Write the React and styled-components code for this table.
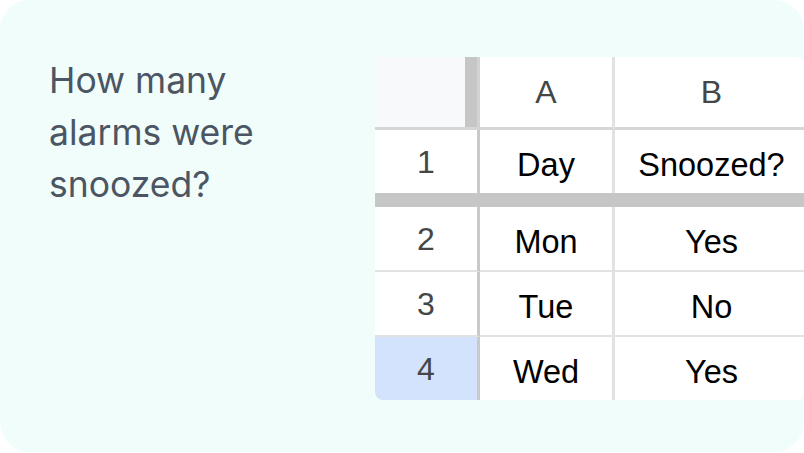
import React from "react";
import styled, { createGlobalStyle, css } from "styled-components";

const Global = createGlobalStyle`
  html, body { margin: 0; padding: 0; background: #ffffff; }
  #root { width: 804px; height: 453px; }
`;

const Card = styled.div`
  box-sizing: border-box;
  width: 804px;
  height: 452px;
  background: #f0fdfa;
  border-radius: 30px;
  overflow: hidden;
  display: grid;
  grid-template-columns: 326px 429px;
  padding: 57px 0 0 49px;
`;

const Question = styled.p`
  margin: -2px 0 0 0;
  font-family: Inter, "Liberation Sans", sans-serif;
  font-size: 35.5px;
  line-height: 52px;
  font-weight: 400;
  color: #4b5563;
  width: 260px;
`;

const Sheet = styled.div`
  display: grid;
  grid-template-columns: 105px 135px 1fr;
  grid-template-rows: 73px 63px 14px 65px 65px 63px;
  width: 429px;
  height: 343px;
  background: #ffffff;
  border-radius: 0 8px 8px 8px;
  overflow: hidden;
  font-family: "Liberation Sans", Arial, sans-serif;
`;

const Cell = styled.div`
  box-sizing: border-box;
  display: flex;
  align-items: center;
  justify-content: center;
  padding-top: 7px;
  padding-left: ${(p) => (p.$lastCol ? "4px" : "0")};
  font-size: 32.5px;
  color: #000000;
  background: #ffffff;
  border-right: ${(p) => (p.$lastCol ? "none" : "3px solid #e2e2e2")};
  border-bottom: ${(p) => (p.$lastRow || p.$beforeFreeze ? "none" : "2px solid #e2e2e2")};

  ${(p) =>
    p.$head &&
    css`
      padding-top: 0;
      color: #444746;
      font-size: 32px;
      border-bottom: 3px solid #d6d6d6;
    `}

  ${(p) =>
    p.$rowHead &&
    css`
      padding-top: 2px;
      color: #444746;
      font-size: 32px;
      border-right: 3px solid #c9c9c9;
    `}

  ${(p) =>
    p.$selected &&
    css`
      background: #d3e3fd;
    `}
`;

const Corner = styled.div`
  box-sizing: border-box;
  background: linear-gradient(to right, #f8f9fa 90px, #c6c6c6 90px);
  border-right: 3px solid #d2d2d2;
  border-bottom: 3px solid #d6d6d6;
`;

const FreezeBar = styled.div`
  grid-column: 1 / -1;
  background: #c6c6c6;
`;

const rows = [
  { n: "1", a: "Day", b: "Snoozed?" },
  { n: "2", a: "Mon", b: "Yes" },
  { n: "3", a: "Tue", b: "No" },
  { n: "4", a: "Wed", b: "Yes", selected: true },
];

export default function App() {
  return (
    <>
      <Global />
      <Card>
        <Question>How many alarms were snoozed?</Question>
        <Sheet>
          <Corner />
          <Cell $head>A</Cell>
          <Cell $head $lastCol>
            B
          </Cell>
          {rows.map((r, i) => {
            const last = i === rows.length - 1;
            const beforeFreeze = i === 0;
            return (
              <React.Fragment key={r.n}>
                <Cell $rowHead $selected={r.selected} $lastRow={last} $beforeFreeze={beforeFreeze}>
                  {r.n}
                </Cell>
                <Cell $lastRow={last} $beforeFreeze={beforeFreeze}>
                  {r.a}
                </Cell>
                <Cell $lastCol $lastRow={last} $beforeFreeze={beforeFreeze}>
                  {r.b}
                </Cell>
                {beforeFreeze && <FreezeBar />}
              </React.Fragment>
            );
          })}
        </Sheet>
      </Card>
    </>
  );
}
